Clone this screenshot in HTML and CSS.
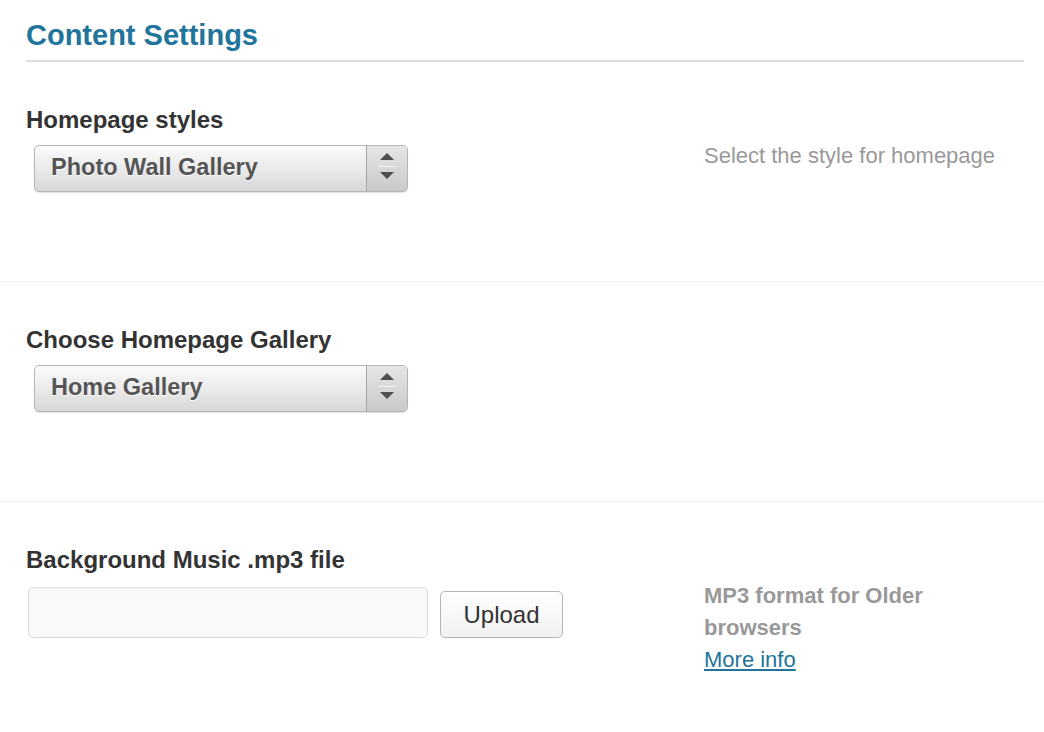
FILE: index.html
```html
<!DOCTYPE html>
<html>
<head>
<meta charset="utf-8">
<link rel="stylesheet" href="styles.css">
</head>
<body>
<div class="page">
  <header class="title-wrap">
    <h2 class="title">Content Settings</h2>
  </header>

  <section class="row">
    <div class="field">
      <div class="label">Homepage styles</div>
      <div class="select">
        <span class="select-value">Photo Wall Gallery</span>
        <span class="select-arrows">
          <svg width="40" height="44" viewBox="0 0 40 44"><path d="M20 7 L27 14 L13 14 Z" fill="#4f4f4f"/><line x1="11" y1="20.5" x2="29" y2="20.5" stroke="#f2f2f2" stroke-width="1"/><path d="M13 26 L27 26 L20 33 Z" fill="#4f4f4f"/></svg>
        </span>
      </div>
    </div>
    <div class="desc">Select the style for homepage</div>
  </section>

  <section class="row">
    <div class="field">
      <div class="label">Choose Homepage Gallery</div>
      <div class="select">
        <span class="select-value">Home Gallery</span>
        <span class="select-arrows">
          <svg width="40" height="44" viewBox="0 0 40 44"><path d="M20 7 L27 14 L13 14 Z" fill="#4f4f4f"/><line x1="11" y1="20.5" x2="29" y2="20.5" stroke="#f2f2f2" stroke-width="1"/><path d="M13 26 L27 26 L20 33 Z" fill="#4f4f4f"/></svg>
        </span>
      </div>
    </div>
    <div class="desc"></div>
  </section>

  <section class="row row-last">
    <div class="field">
      <div class="label">Background Music .mp3 file</div>
      <div class="upload">
        <div class="text-input"></div>
        <button class="btn">Upload</button>
      </div>
    </div>
    <div class="desc desc-bold">MP3 format for Older browsers<br><a class="link" href="#">More info</a></div>
  </section>
</div>
</body>
</html>
```

FILE: styles.css
```css
html, body {
  margin: 0;
  padding: 0;
  background: #fff;
}
body {
  font-family: "Liberation Sans", Arial, Helvetica, sans-serif;
  color: #333;
}
.page {
  width: 1044px;
}
.title-wrap {
  padding: 19px 20px 0 26px;
}
.title {
  margin: 0;
  font-size: 29px;
  line-height: 32px;
  font-weight: bold;
  color: #21759b;
  padding-bottom: 9px;
  border-bottom: 2px solid #dddddd;
}
.row {
  display: flex;
  padding: 0 20px 0 26px;
  border-bottom: 1px solid #f1f1f1;
}
.row-last {
  border-bottom: none;
}
.field {
  width: 678px;
  padding: 44px 0 89px;
}
.label {
  font-size: 24px;
  line-height: 28px;
  font-weight: bold;
  color: #333;
}
.select {
  margin: 11px 0 0 8px;
  width: 374px;
  height: 47px;
  box-sizing: border-box;
  border: 1px solid #b5b5b5;
  border-radius: 5px;
  background: linear-gradient(#fbfbfb, #e9e9e9 55%, #d7d7d7);
  box-shadow: 0 1px 1px rgba(0,0,0,0.12);
  display: flex;
  overflow: hidden;
}
.select-value {
  flex: 1;
  padding-left: 16px;
  font-size: 23.5px;
  line-height: 43px;
  font-weight: bold;
  color: #555;
  text-shadow: 0 1px 0 #fff;
}
.select-arrows {
  width: 40px;
  border-left: 1px solid #a5a5a5;
  background: linear-gradient(#e6e6e6, #c9c9c9);
  display: flex;
}
.desc {
  width: 300px;
  padding-top: 78px;
  font-size: 22px;
  line-height: 32px;
  color: #999;
}
.desc-bold {
  font-weight: bold;
}
.link {
  font-weight: normal;
  color: #21759b;
  text-decoration: underline;
}
.upload {
  display: flex;
  align-items: flex-start;
  margin: 13px 0 0 2px;
}
.text-input {
  width: 400px;
  height: 51px;
  box-sizing: border-box;
  border: 1px solid #dcdcdc;
  border-radius: 5px;
  background: #f9f9f9;
}
.btn {
  margin: 4px 0 0 12px;
  width: 123px;
  height: 47px;
  box-sizing: border-box;
  border: 1px solid #b5b5b5;
  border-radius: 5px;
  background: linear-gradient(#ffffff, #f1f1f1);
  font-family: "Liberation Sans", Arial, Helvetica, sans-serif;
  font-size: 24px;
  color: #333;
  padding: 0;
}
```
